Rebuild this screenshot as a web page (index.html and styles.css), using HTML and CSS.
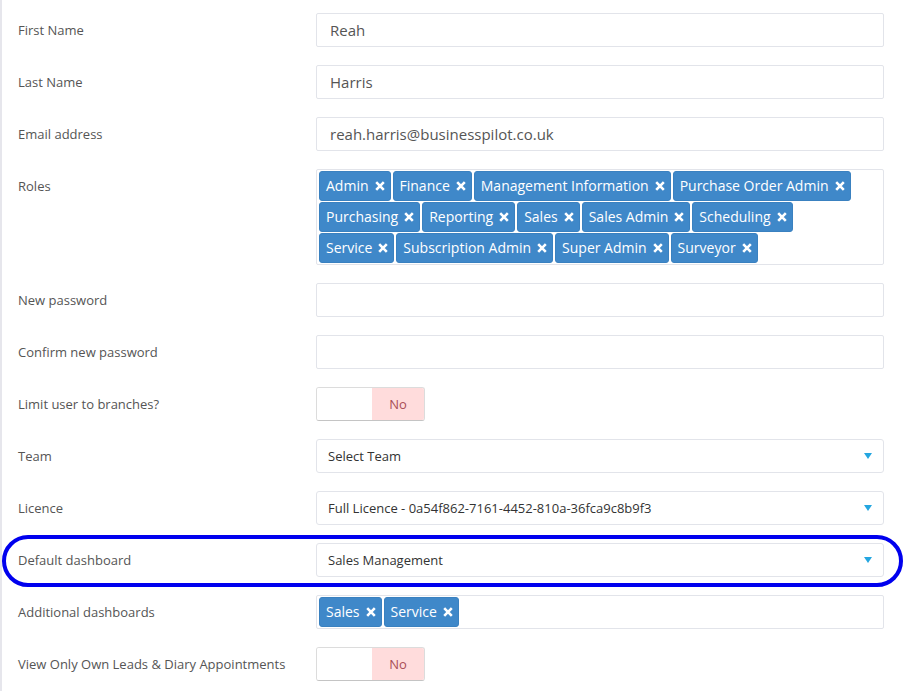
FILE: index.html
```html
<!DOCTYPE html>
<html>
<head>
<meta charset="utf-8">
<link rel="stylesheet" href="styles.css">
</head>
<body>
<div class="page">
  <div class="row">
    <div class="label">First Name</div>
    <div class="control"><div class="input">Reah</div></div>
  </div>
  <div class="row">
    <div class="label">Last Name</div>
    <div class="control"><div class="input">Harris</div></div>
  </div>
  <div class="row">
    <div class="label">Email address</div>
    <div class="control"><div class="input">reah.harris@businesspilot.co.uk</div></div>
  </div>
  <div class="row">
    <div class="label">Roles</div>
    <div class="control">
      <div class="tags">
        <span class="tag">Admin<svg class="x" viewBox="0 0 10 10"><path d="M1.2 1.2 L8.8 8.8 M8.8 1.2 L1.2 8.8"/></svg></span>
        <span class="tag">Finance<svg class="x" viewBox="0 0 10 10"><path d="M1.2 1.2 L8.8 8.8 M8.8 1.2 L1.2 8.8"/></svg></span>
        <span class="tag">Management Information<svg class="x" viewBox="0 0 10 10"><path d="M1.2 1.2 L8.8 8.8 M8.8 1.2 L1.2 8.8"/></svg></span>
        <span class="tag">Purchase Order Admin<svg class="x" viewBox="0 0 10 10"><path d="M1.2 1.2 L8.8 8.8 M8.8 1.2 L1.2 8.8"/></svg></span>
        <span class="tag">Purchasing<svg class="x" viewBox="0 0 10 10"><path d="M1.2 1.2 L8.8 8.8 M8.8 1.2 L1.2 8.8"/></svg></span>
        <span class="tag">Reporting<svg class="x" viewBox="0 0 10 10"><path d="M1.2 1.2 L8.8 8.8 M8.8 1.2 L1.2 8.8"/></svg></span>
        <span class="tag">Sales<svg class="x" viewBox="0 0 10 10"><path d="M1.2 1.2 L8.8 8.8 M8.8 1.2 L1.2 8.8"/></svg></span>
        <span class="tag">Sales Admin<svg class="x" viewBox="0 0 10 10"><path d="M1.2 1.2 L8.8 8.8 M8.8 1.2 L1.2 8.8"/></svg></span>
        <span class="tag">Scheduling<svg class="x" viewBox="0 0 10 10"><path d="M1.2 1.2 L8.8 8.8 M8.8 1.2 L1.2 8.8"/></svg></span>
        <span class="tag">Service<svg class="x" viewBox="0 0 10 10"><path d="M1.2 1.2 L8.8 8.8 M8.8 1.2 L1.2 8.8"/></svg></span>
        <span class="tag">Subscription Admin<svg class="x" viewBox="0 0 10 10"><path d="M1.2 1.2 L8.8 8.8 M8.8 1.2 L1.2 8.8"/></svg></span>
        <span class="tag">Super Admin<svg class="x" viewBox="0 0 10 10"><path d="M1.2 1.2 L8.8 8.8 M8.8 1.2 L1.2 8.8"/></svg></span>
        <span class="tag">Surveyor<svg class="x" viewBox="0 0 10 10"><path d="M1.2 1.2 L8.8 8.8 M8.8 1.2 L1.2 8.8"/></svg></span>
      </div>
    </div>
  </div>
  <div class="row">
    <div class="label">New password</div>
    <div class="control"><div class="input"></div></div>
  </div>
  <div class="row">
    <div class="label">Confirm new password</div>
    <div class="control"><div class="input"></div></div>
  </div>
  <div class="row">
    <div class="label">Limit user to branches?</div>
    <div class="control"><div class="toggle"><span class="toggle-off"></span><span class="toggle-no">No</span></div></div>
  </div>
  <div class="row">
    <div class="label">Team</div>
    <div class="control"><div class="select"><span>Select Team</span><svg class="caret" viewBox="0 0 8 6"><path d="M0 0 H8 L4 6 Z"/></svg></div></div>
  </div>
  <div class="row">
    <div class="label">Licence</div>
    <div class="control"><div class="select"><span>Full Licence - 0a54f862-7161-4452-810a-36fca9c8b9f3</span><svg class="caret" viewBox="0 0 8 6"><path d="M0 0 H8 L4 6 Z"/></svg></div></div>
  </div>
  <div class="row highlighted">
    <div class="label">Default dashboard</div>
    <div class="control"><div class="select"><span>Sales Management</span><svg class="caret" viewBox="0 0 8 6"><path d="M0 0 H8 L4 6 Z"/></svg></div></div>
  </div>
  <div class="row">
    <div class="label">Additional dashboards</div>
    <div class="control">
      <div class="tags single">
        <span class="tag">Sales<svg class="x" viewBox="0 0 10 10"><path d="M1.2 1.2 L8.8 8.8 M8.8 1.2 L1.2 8.8"/></svg></span>
        <span class="tag">Service<svg class="x" viewBox="0 0 10 10"><path d="M1.2 1.2 L8.8 8.8 M8.8 1.2 L1.2 8.8"/></svg></span>
      </div>
    </div>
  </div>
  <div class="row">
    <div class="label">View Only Own Leads &amp; Diary Appointments</div>
    <div class="control"><div class="toggle"><span class="toggle-off"></span><span class="toggle-no">No</span></div></div>
  </div>
</div>
</body>
</html>
```
FILE: styles.css
```css
html, body {
  margin: 0;
  padding: 0;
  background: #ffffff;
}
body {
  font-family: "Open Sans", "Liberation Sans", sans-serif;
  overflow: hidden;
}
.page {
  border-left: 2px solid #e6e6ec;
  min-height: 691px;
  box-sizing: border-box;
  padding: 13px 0 0 16px;
}
.row {
  display: flex;
  align-items: flex-start;
  width: 866px;
  margin-bottom: 18px;
}
.label {
  width: 298px;
  flex: none;
  font-size: 13px;
  line-height: 34px;
  color: #555555;
}
.control {
  width: 568px;
  flex: none;
}
.input {
  height: 34px;
  box-sizing: border-box;
  border: 1px solid #e2e4ea;
  border-radius: 2px;
  padding: 0 13px;
  font-size: 15px;
  line-height: 32px;
  color: #555555;
}
.tags {
  display: flex;
  flex-wrap: wrap;
  column-gap: 2px;
  row-gap: 1px;
  border: 1px solid #e2e4ea;
  border-radius: 2px;
  padding: 1px 14px 1px 2px;
  min-height: 34px;
  box-sizing: border-box;
}
.tag {
  display: inline-flex;
  align-items: center;
  height: 30px;
  box-sizing: border-box;
  padding: 0 5px 0 6px;
  background: #3f88c9;
  border: 1px solid #3a81c0;
  border-radius: 3px;
  color: #ffffff;
  font-size: 14px;
  line-height: 28px;
  white-space: nowrap;
}
.tag .x {
  width: 10px;
  height: 10px;
  margin-left: 6px;
  fill: none;
  stroke: #ffffff;
  stroke-width: 2.6;
}
.toggle {
  width: 109px;
  height: 34px;
  box-sizing: border-box;
  display: flex;
  border: 1px solid #dcdcdc;
  border-bottom-color: #c4c4c4;
  border-radius: 3px;
  overflow: hidden;
}
.toggle-off {
  width: 55px;
  background: #ffffff;
}
.toggle-no {
  flex: 1;
  background: #ffdcdc;
  color: #a94f55;
  font-size: 13px;
  line-height: 33px;
  text-align: center;
}
.select {
  height: 34px;
  box-sizing: border-box;
  display: flex;
  align-items: center;
  justify-content: space-between;
  border: 1px solid #e2e4ea;
  border-radius: 3px;
  padding: 0 11px 0 11px;
  font-size: 13px;
  color: #333333;
}
.caret {
  width: 8px;
  height: 6px;
  fill: #24a6e0;
}
.highlighted {
  position: relative;
}
.highlighted::after {
  content: "";
  position: absolute;
  left: -16px;
  right: -19px;
  top: -8px;
  bottom: -10px;
  border: 4px solid #0000ee;
  border-radius: 26px;
  pointer-events: none;
}
```
